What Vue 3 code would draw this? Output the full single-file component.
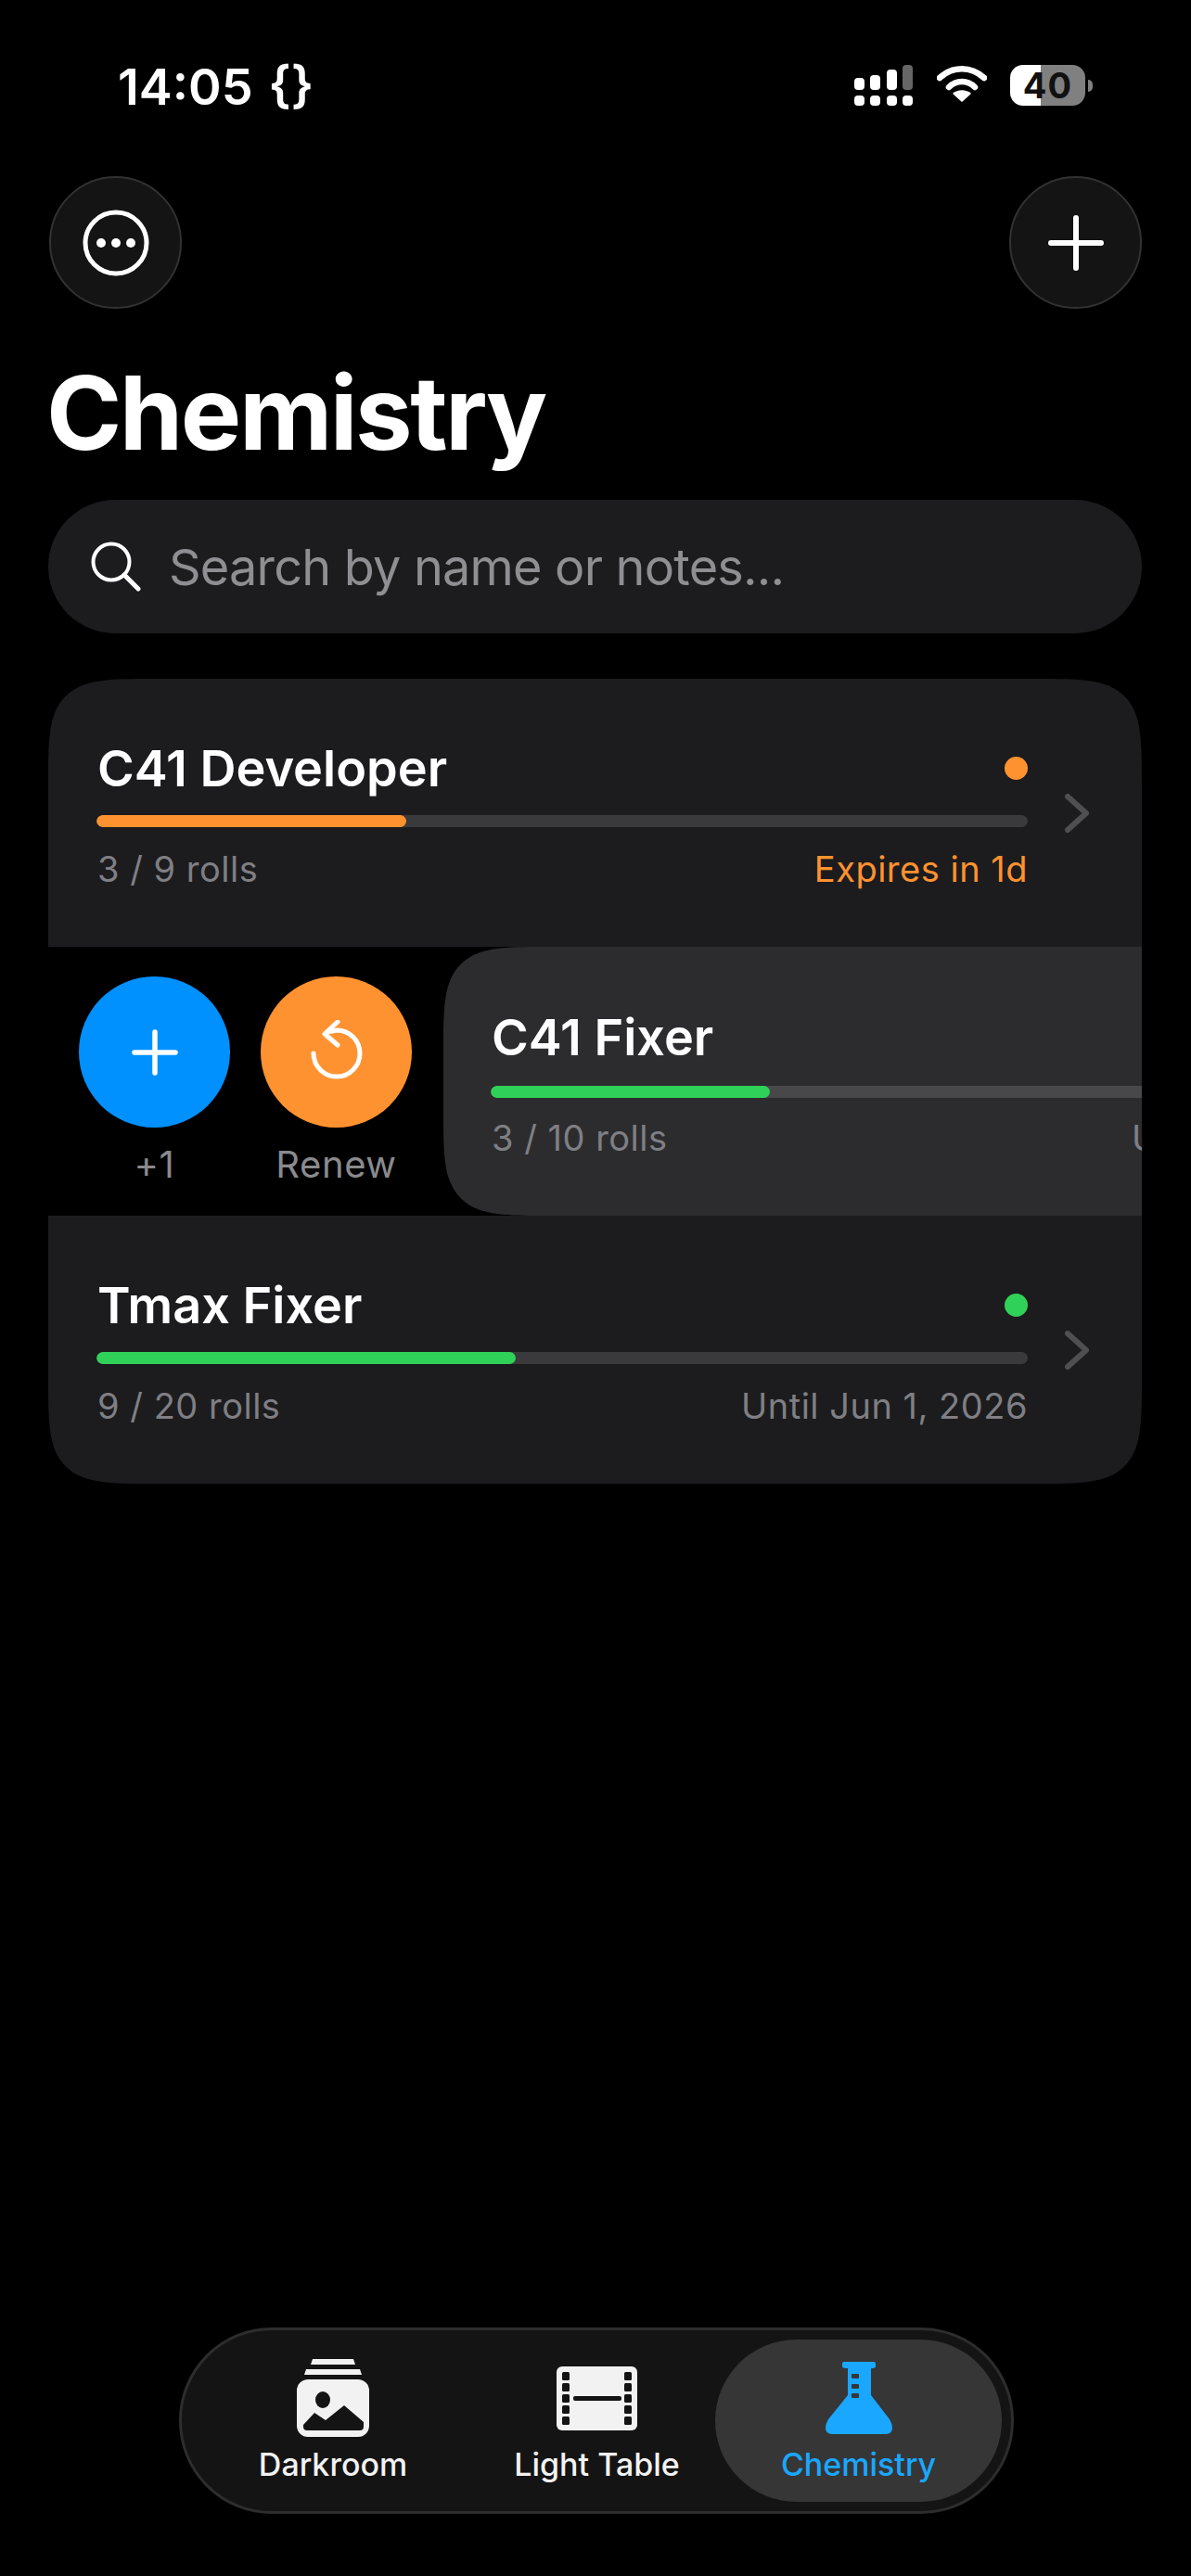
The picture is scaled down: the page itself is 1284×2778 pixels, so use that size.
<script setup>
const tabs = [
  { name: 'Darkroom', icon: 'stack' },
  { name: 'Light Table', icon: 'film' },
  { name: 'Chemistry', icon: 'flask', active: true }
]
const sprockets = [6, 18, 30, 42, 54]
</script>

<template>
  <div class="screen">
    <div class="status">
      <span class="clock">14:05 {}</span>
      <div class="status-icons">
        <svg class="signal" width="64" height="44" viewBox="0 0 64 44">
          <rect x="0" y="14" width="11" height="13" rx="4" fill="#fff" />
          <rect x="17" y="11" width="11" height="16" rx="4" fill="#fff" />
          <rect x="35" y="5" width="11" height="22" rx="4" fill="#fff" />
          <rect x="52" y="0" width="11" height="27" rx="4" fill="#666" />
          <rect x="0" y="33" width="11" height="11" rx="4" fill="#fff" />
          <rect x="17" y="33" width="11" height="11" rx="4" fill="#fff" />
          <rect x="35" y="33" width="11" height="11" rx="4" fill="#fff" />
          <rect x="52" y="33" width="11" height="11" rx="4" fill="#fff" />
        </svg>
        <svg class="wifi" width="54" height="40" viewBox="0 0 54 40">
          <path d="M3 14C17 1 37 1 51 14" fill="none" stroke="#fff" stroke-width="6.5" stroke-linecap="round" />
          <path d="M13 24C21 16 33 16 41 24" fill="none" stroke="#fff" stroke-width="6.5" stroke-linecap="round" />
          <path d="M27 40L17 31C22 26 32 26 37 31Z" fill="#fff" />
        </svg>
        <div class="battery">
          <div class="battery-body"><span>40</span></div>
          <div class="battery-nub"></div>
        </div>
      </div>
    </div>

    <div class="top-row">
      <button class="round-btn">
        <svg width="72" height="72" viewBox="0 0 72 72">
          <circle cx="36" cy="36" r="33" fill="none" stroke="#fff" stroke-width="5" />
          <circle cx="20" cy="36" r="5" fill="#fff" />
          <circle cx="36" cy="36" r="5" fill="#fff" />
          <circle cx="52" cy="36" r="5" fill="#fff" />
        </svg>
      </button>
      <button class="round-btn">
        <svg width="60" height="60" viewBox="0 0 60 60">
          <path d="M30 3V57M3 30H57" stroke="#fff" stroke-width="6" stroke-linecap="round" />
        </svg>
      </button>
    </div>

    <h1 class="title">Chemistry</h1>

    <div class="search">
      <svg width="54" height="54" viewBox="0 0 54 54">
        <circle cx="22" cy="22" r="19.5" fill="none" stroke="#fff" stroke-width="4" />
        <path d="M36 36L51 51" stroke="#fff" stroke-width="5" stroke-linecap="round" />
      </svg>
      <span>Search by name or notes...</span>
    </div>

    <div class="list">
      <div class="row">
        <div class="row-body">
          <div class="row-head">
            <span class="row-name">C41 Developer</span>
            <span class="dot orange"></span>
          </div>
          <div class="track"><div class="fill orange" style="width: 33.3%"></div></div>
          <div class="row-meta">
            <span>3 / 9 rolls</span>
            <span class="orange-text">Expires in 1d</span>
          </div>
        </div>
        <svg class="chevron" width="26" height="42" viewBox="0 0 26 42">
          <path d="M3 3L23 21L3 39" fill="none" stroke="#4f4f52" stroke-width="6" stroke-linecap="round" stroke-linejoin="round" />
        </svg>
      </div>

      <div class="swipe-row">
        <div class="actions">
          <div class="action">
            <div class="action-circle blue">
              <svg width="50" height="50" viewBox="0 0 50 50">
                <path d="M25 3V47M3 25H47" stroke="#fff" stroke-width="5.5" stroke-linecap="round" />
              </svg>
            </div>
            <span>+1</span>
          </div>
          <div class="action">
            <div class="action-circle orange">
              <svg class="renew-icon" width="56" height="64" viewBox="0 0 56 64">
                <path d="M3 36A25 25 0 1 0 28 11L18 13" fill="none" stroke="#fff" stroke-width="5" stroke-linecap="round" />
                <path d="M29 2L15 15L29 27" fill="none" stroke="#fff" stroke-width="5" stroke-linecap="round" stroke-linejoin="round" />
              </svg>
            </div>
            <span>Renew</span>
          </div>
        </div>
        <div class="swiped">
          <div class="row-body">
            <div class="row-head">
              <span class="row-name">C41 Fixer</span>
              <span class="dot green"></span>
            </div>
            <div class="track light"><div class="fill green" style="width: 30%"></div></div>
            <div class="row-meta">
              <span>3 / 10 rolls</span>
              <span>Until Jun 1, 2026</span>
            </div>
          </div>
        </div>
      </div>

      <div class="row">
        <div class="row-body">
          <div class="row-head">
            <span class="row-name">Tmax Fixer</span>
            <span class="dot green"></span>
          </div>
          <div class="track"><div class="fill green" style="width: 45%"></div></div>
          <div class="row-meta">
            <span>9 / 20 rolls</span>
            <span>Until Jun 1, 2026</span>
          </div>
        </div>
        <svg class="chevron" width="26" height="42" viewBox="0 0 26 42">
          <path d="M3 3L23 21L3 39" fill="none" stroke="#4f4f52" stroke-width="6" stroke-linecap="round" stroke-linejoin="round" />
        </svg>
      </div>
    </div>

    <nav class="tabbar">
      <div v-for="tab in tabs" :key="tab.name" class="tab" :class="{ active: tab.active }">
        <div class="tab-icon">
          <svg v-if="tab.icon === 'stack'" width="78" height="84" viewBox="0 0 78 84">
            <path d="M17 0H61L63 6H15Z" fill="#f2f2f2" />
            <path d="M10 11H68L70 17H8Z" fill="#f2f2f2" />
            <rect x="0" y="22" width="78" height="62" rx="12" fill="#f2f2f2" />
            <ellipse cx="28" cy="44" rx="8" ry="9" fill="#141414" />
            <path d="M7 71L19 58L31 66L51 50L72 68V73Q72 77 68 77H11Q7 77 7 73Z" fill="#141414" />
          </svg>
          <svg v-else-if="tab.icon === 'film'" width="87" height="69" viewBox="0 0 87 69">
            <rect width="87" height="69" rx="6" fill="#f2f2f2" />
            <template v-for="y in sprockets" :key="y">
              <rect x="6" :y="y" width="8" height="9" rx="1.5" fill="#141414" />
              <rect x="73" :y="y" width="8" height="9" rx="1.5" fill="#141414" />
            </template>
            <rect x="18" y="32" width="52" height="5" rx="2" fill="#141414" />
          </svg>
          <svg v-else width="72" height="78" viewBox="0 0 72 78">
            <path d="M18 2Q18 0 20 0H52Q54 0 54 2V5Q54 7 49 7V36L69 62Q72 67 72 71Q72 78 65 78H7Q0 78 0 71Q0 67 3 62L24 36V7Q18 7 18 5Z" fill="#1aa7ff" />
            <rect x="28" y="13" width="8" height="5" rx="1" fill="#363636" />
            <rect x="28" y="24" width="8" height="5" rx="1" fill="#363636" />
            <rect x="28" y="34" width="8" height="5" rx="1" fill="#363636" />
          </svg>
        </div>
        <span>{{ tab.name }}</span>
      </div>
    </nav>
  </div>
</template>

<style>
html, body {
  background: #000;
}
</style>

<style scoped>
.screen {
  min-height: 2778px;
  box-sizing: border-box;
  padding: 0 53px 67px 52px;
  display: flex;
  flex-direction: column;
  background: #000;
  color: #fff;
  font-family: Inter, "Liberation Sans", sans-serif;
}

.status {
  height: 190px;
  box-sizing: border-box;
  padding: 64px 53px 0 75px;
  display: flex;
  justify-content: space-between;
  align-items: flex-start;
}

.clock {
  font-size: 54px;
  line-height: 60px;
  font-weight: 600;
  word-spacing: 3px;
}

.status-icons {
  display: flex;
  align-items: flex-start;
  gap: 25px;
  margin-top: 6px;
}

.battery {
  display: flex;
  align-items: center;
  gap: 3px;
}

.battery-body {
  width: 81px;
  height: 44px;
  border-radius: 14px;
  background: linear-gradient(90deg, #fff 33px, #808080 33px);
  color: #111;
  font-size: 38px;
  font-weight: 700;
  line-height: 44px;
  text-align: center;
  letter-spacing: 1px;
}

.battery-nub {
  width: 5px;
  height: 13px;
  background: #808080;
  border-radius: 0 6px 6px 0;
}

.top-row {
  display: flex;
  justify-content: space-between;
  padding-left: 1px;
}

.round-btn {
  width: 143px;
  height: 143px;
  padding: 0;
  border-radius: 50%;
  border: 2px solid #323232;
  background: #141414;
  display: flex;
  align-items: center;
  justify-content: center;
}

.title {
  margin: 52px 0 0 -2px;
  font-size: 110px;
  line-height: 120px;
  font-weight: 700;
  letter-spacing: -2.5px;
}

.search {
  margin-top: 34px;
  height: 144px;
  border-radius: 72px;
  background: #1c1c1e;
  display: flex;
  align-items: center;
  gap: 30px;
  padding-left: 46px;
  font-size: 54px;
  letter-spacing: -0.8px;
  color: #8e8e93;
}

.list {
  margin-top: 49px;
  border-radius: 118px;
  corner-shape: squircle;
  overflow: hidden;
  background: #1c1c1e;
}

.row {
  height: 289px;
  box-sizing: border-box;
  padding-left: 52px;
  display: flex;
  align-items: center;
  gap: 40px;
}

.row-body {
  width: 1004px;
  flex-shrink: 0;
}

.row .row-body {
  padding-top: 4px;
}

.row-head {
  display: flex;
  justify-content: space-between;
  align-items: center;
  height: 66px;
  padding-left: 1px;
}

.row-name {
  font-size: 54px;
  font-weight: 600;
}

.dot {
  width: 25px;
  height: 25px;
  border-radius: 50%;
}

.orange {
  background: #ff9230;
}

.green {
  background: #30d158;
}

.blue {
  background: #0091ff;
}

.orange-text {
  color: #ff9230;
}

.track {
  margin-top: 18px;
  height: 13px;
  border-radius: 7px;
  background: #3a3a3c;
  overflow: hidden;
}

.track.light {
  margin-top: 20px;
  background: #48484a;
}

.fill {
  height: 100%;
  border-radius: 7px;
}

.row-meta {
  margin-top: 20px;
  padding-left: 1px;
  display: flex;
  justify-content: space-between;
  font-size: 38px;
  line-height: 50px;
  letter-spacing: 0.5px;
  color: #7f7f84;
}

.swipe-row {
  height: 290px;
  display: flex;
  background: #000;
  overflow: hidden;
}

.actions {
  width: 426px;
  flex-shrink: 0;
  box-sizing: border-box;
  padding: 32px 0 0 33px;
  display: flex;
  gap: 33px;
}

.action {
  width: 163px;
  display: flex;
  flex-direction: column;
  align-items: center;
  font-size: 40px;
  color: #8a8a8e;
}

.action span {
  margin-top: 12px;
  line-height: 56px;
  letter-spacing: 0.6px;
}

.action-circle {
  width: 163px;
  height: 163px;
  border-radius: 50%;
  display: flex;
  align-items: center;
  justify-content: center;
}

.renew-icon {
  margin-bottom: 6px;
}

.swiped {
  flex-shrink: 0;
  width: 1100px;
  box-sizing: border-box;
  padding: 64px 0 0 51px;
  background: #2c2c2e;
  border-radius: 118px 0 0 118px;
  corner-shape: squircle;
}

.swiped .row-meta {
  margin-top: 18px;
  margin-right: 4px;
}

.tabbar {
  margin-top: auto;
  margin-left: 3px;
  align-self: center;
  width: 900px;
  height: 201px;
  box-sizing: border-box;
  padding: 10px 9px 10px 6px;
  border: 3px solid #2d2d2d;
  border-radius: 100px;
  background: #141414;
  display: grid;
  grid-template-columns: 314px 247px 309px;
  column-gap: 4px;
}

.tab {
  display: flex;
  flex-direction: column;
  align-items: center;
  justify-content: flex-end;
  padding-bottom: 20px;
  border-radius: 88px;
  font-size: 34px;
  line-height: 40px;
  font-weight: 500;
  color: #f2f2f2;
}

.tab-icon {
  height: 84px;
  display: flex;
  align-items: center;
  justify-content: center;
  margin-bottom: 10px;
}

.tab.active {
  background: #363636;
  color: #1aa7ff;
}
</style>
